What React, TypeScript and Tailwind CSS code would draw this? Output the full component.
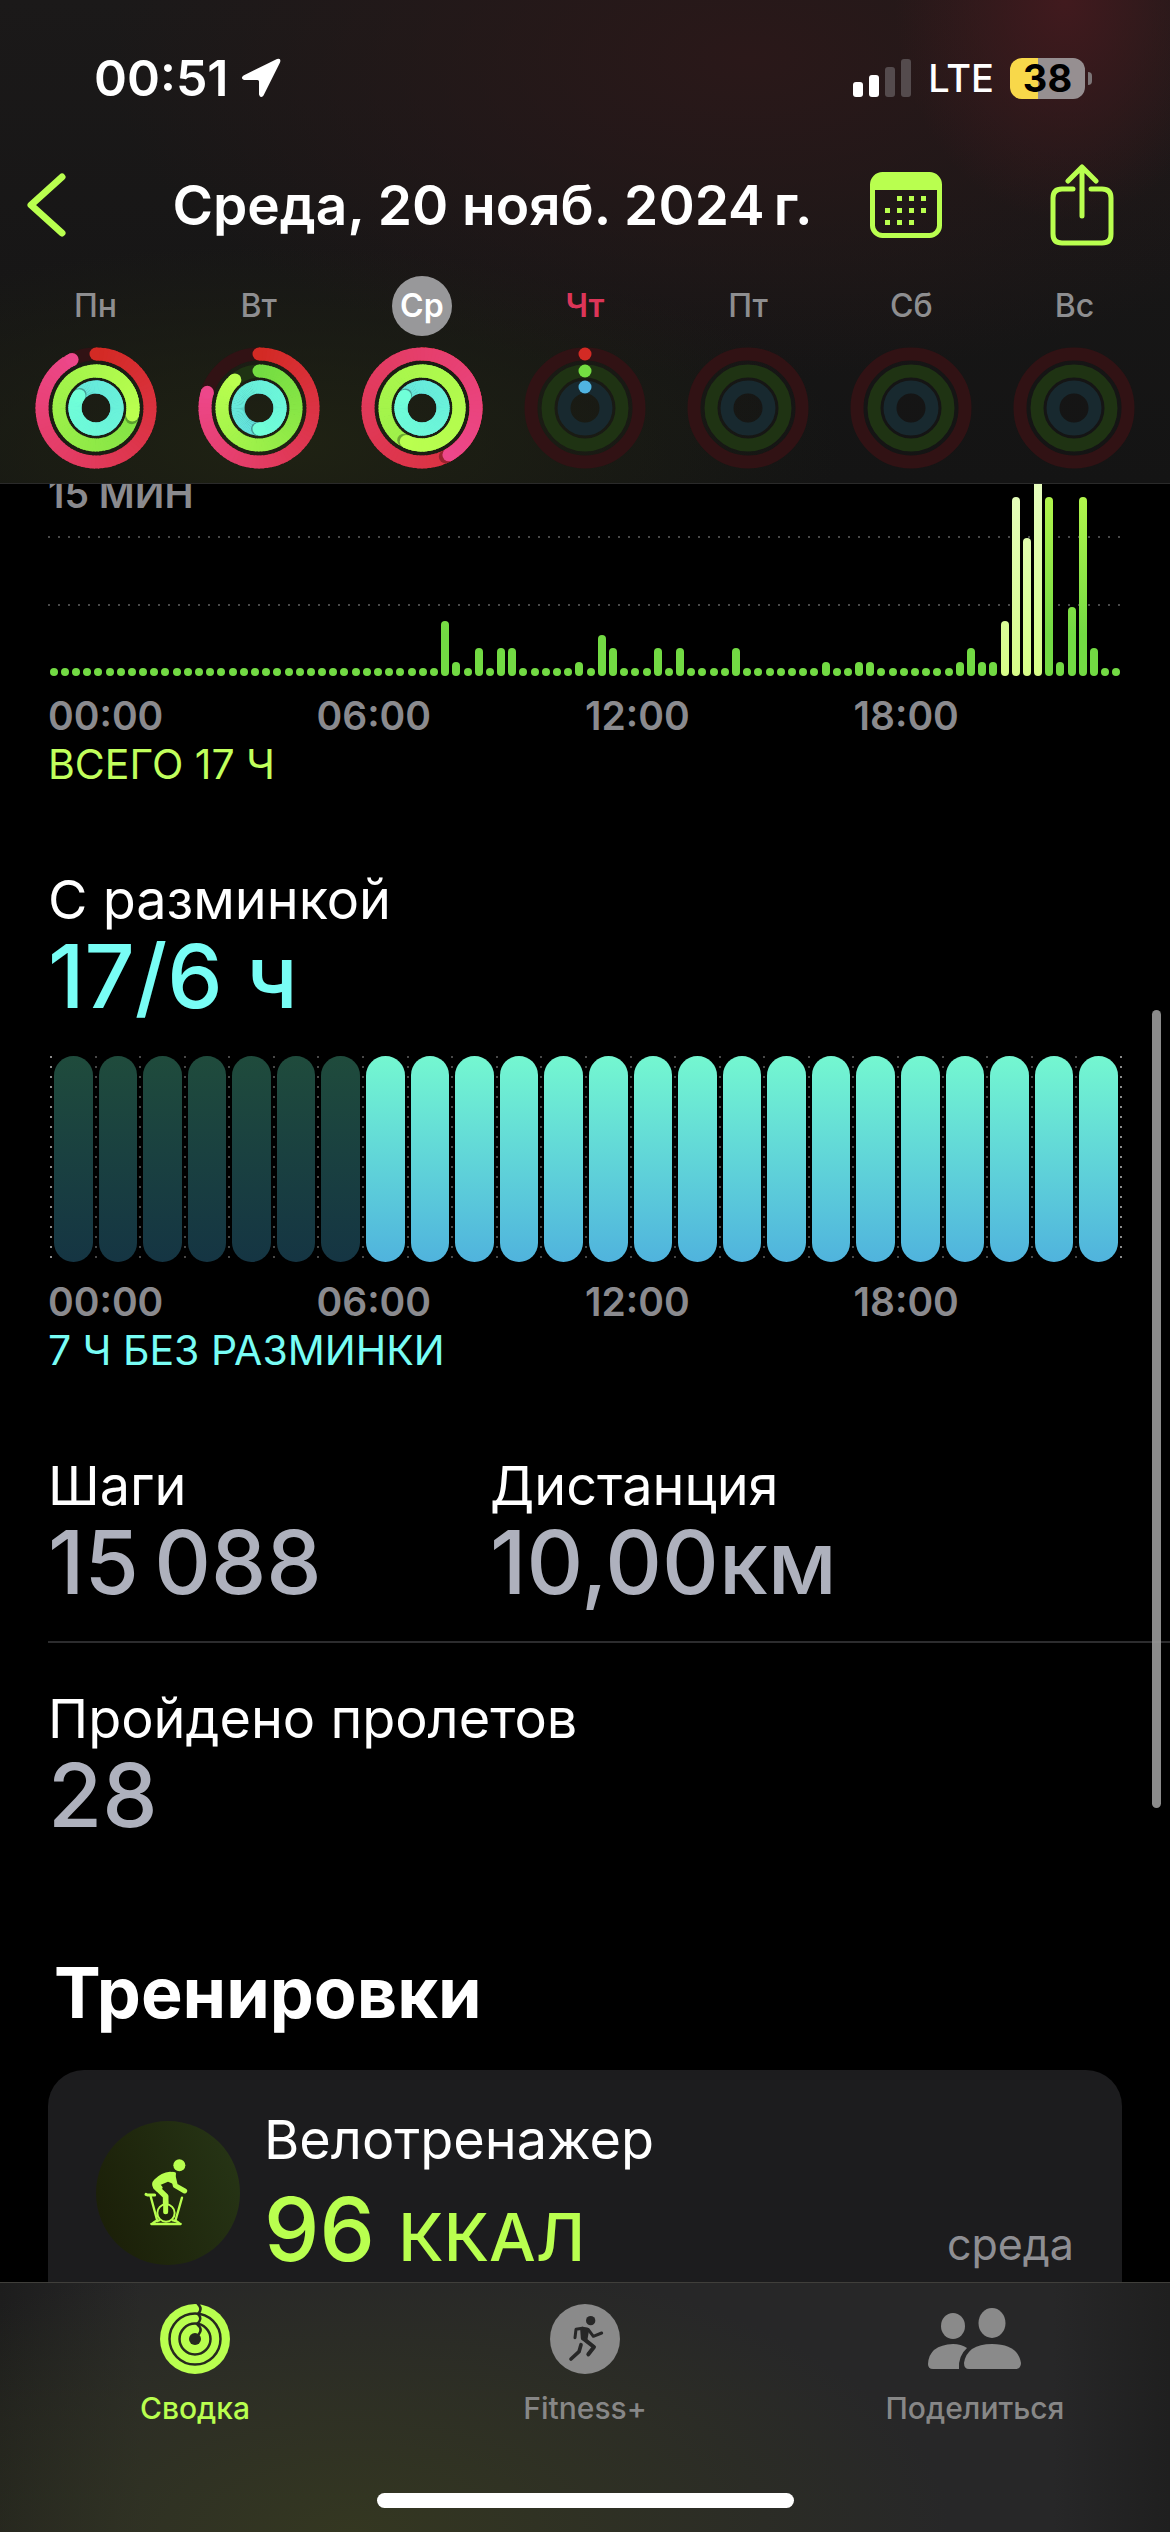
import type { ReactNode } from "react";

type RingSpec = {
  radius: number;
  from: number[];
  to: number[];
  track: string;
};

const RINGS: RingSpec[] = [
  { radius: 54, from: [211, 42, 36], to: [237, 71, 138], track: "#311214" },
  { radius: 37, from: [116, 220, 66], to: [186, 255, 79], track: "#1f3313" },
  { radius: 21, from: [80, 180, 226], to: [112, 255, 216], track: "#18292f" },
];

const DAYS = [
  { label: "Пн", laps: [0.927, 1.28, 1.85] },
  { label: "Вт", laps: [0.797, 0.887, 1.5] },
  { label: "Ср", laps: [1.417, 1.57, 1.845], selected: true },
  { label: "Чт", laps: [0, 0, 0], today: true },
  { label: "Пт" },
  { label: "Сб" },
  { label: "Вс" },
];

// minutes of exercise per quarter of an hour, by slot
const MINUTES: Record<number, number> = {
  35: 4, 36: 1, 38: 2, 40: 2, 41: 2, 47: 1, 49: 3, 50: 2, 54: 2, 56: 2,
  61: 2, 69: 1, 72: 1, 73: 1, 81: 1, 82: 2, 83: 1, 84: 1, 85: 4, 86: 13,
  87: 10, 88: 15, 89: 13, 90: 1, 91: 5, 92: 13, 93: 2,
};

const HOURS = ["00:00", "06:00", "12:00", "18:00"];

const point = (radius: number, lap: number) => {
  const a = lap * Math.PI * 2;
  return [61 + radius * Math.sin(a), 61 - radius * Math.cos(a)];
};

const mix = (from: number[], to: number[], t: number) =>
  `rgb(${from.map((c, i) => Math.round(c + (to[i] - c) * t)).join(",")})`;

const Ring = ({ ring, laps }: { ring: RingSpec; laps?: number }) => {
  const { radius, from, to, track } = ring;
  if (laps === undefined) {
    return <circle cx="61" cy="61" r={radius} fill="none" stroke={track} strokeWidth="13" />;
  }

  const steps = Math.round(laps * 90);
  const ease = laps >= 1.5 ? 0.5 : 1;
  const [sx, sy] = point(radius, 0);
  const [hx, hy] = point(radius, laps);
  const [gx, gy] = point(radius, laps + 0.012);

  return (
    <>
      <circle cx="61" cy="61" r={radius} fill="none" stroke={track} strokeWidth="13" />
      <circle cx={sx} cy={sy} r="6.5" fill={mix(from, to, 0)} />
      {Array.from({ length: steps }, (_, i) => {
        const [x1, y1] = point(radius, (i / steps) * laps);
        const [x2, y2] = point(radius, ((i + 1.3) / steps) * laps);
        return (
          <path
            key={i}
            d={`M${x1} ${y1}A${radius} ${radius} 0 0 1 ${x2} ${y2}`}
            fill="none"
            stroke={mix(from, to, Math.pow(i / steps, ease))}
            strokeWidth="13"
          />
        );
      })}
      {laps > 1 ? <circle cx={gx} cy={gy} r="6.5" fill="#000" opacity="0.3" /> : null}
      {laps > 0 ? <circle cx={hx} cy={hy} r="6.5" fill={mix(from, to, 1)} /> : null}
    </>
  );
};

const ActivityRings = ({ laps }: { laps?: number[] }) => (
  <svg className="size-[122px]" viewBox="0 0 122 122" aria-hidden>
    {RINGS.map((ring, i) => (
      <Ring key={ring.radius} ring={ring} laps={laps?.[i]} />
    ))}
  </svg>
);

const StatusBar = () => (
  <div className="flex h-[156px] items-center justify-between pr-[78px] pl-[94px]">
    <div className="flex items-center gap-3">
      <span className="text-[50px] leading-none font-semibold">00:51</span>
      <svg className="size-10" viewBox="0 0 40 40" aria-hidden>
        <path
          d="M36 1 2.500 17.500Q-1 20 3 22H16.500Q18 22 18 23.500V36.500Q19.500 41 22.500 37.500L39 4.500Q40.500 -0.500 36 1Z"
          fill="#fff"
        />
      </svg>
    </div>
    <div className="flex items-center gap-4">
      <svg className="h-[38px] w-[59px]" viewBox="0 0 59 38" aria-hidden>
        <rect x="0" y="23" width="10" height="15" rx="3" fill="#fff" />
        <rect x="16" y="16" width="10" height="22" rx="3" fill="#fff" />
        <rect x="32" y="8" width="10" height="30" rx="3" fill="#544b4d" />
        <rect x="48" y="0" width="10" height="38" rx="3" fill="#544b4d" />
      </svg>
      <span className="text-[38px] leading-none font-medium">LTE</span>
      <div className="flex items-center gap-[3px]">
        <div className="flex h-[41px] w-[75px] items-center justify-center rounded-[12px] bg-linear-to-r from-[#f8d84a] from-38% to-[#968f91] to-38% text-[38px] leading-none font-bold text-black">
          38
        </div>
        <div className="h-[13px] w-1 rounded-r-full bg-[#7c7577]" />
      </div>
    </div>
  </div>
);

const TitleBar = () => (
  <div className="flex h-[98px] items-center pr-[56px] pl-[27px] text-[#b9ff4f]">
    <button type="button" aria-label="Назад">
      <svg className="h-[64px] w-[40px]" viewBox="0 0 40 64" fill="none" aria-hidden>
        <path d="M35 4 4 32 35 60" stroke="currentColor" strokeWidth="7" strokeLinecap="round" strokeLinejoin="round" />
      </svg>
    </button>
    <h1 className="flex-1 pl-12 text-center text-[55px] leading-none font-semibold whitespace-nowrap text-white">
      {"Среда, 20 нояб. 2024\u2009г."}
    </h1>
    <button type="button" aria-label="Календарь" className="mr-[108px]">
      <svg className="h-[66px] w-[72px]" viewBox="0 0 72 66" fill="none" aria-hidden>
        <rect x="2.500" y="2.500" width="67" height="61" rx="10" stroke="currentColor" strokeWidth="5" />
        <path d="M3 18V12Q3 3 12 3H60Q69 3 69 12V18Z" fill="currentColor" />
        <g fill="currentColor">
          <path d="M27 24h5v5h-5zM39 24h5v5h-5zM51 24h5v5h-5z" />
          <path d="M15 36h5v5h-5zM27 36h5v5h-5zM39 36h5v5h-5zM51 36h5v5h-5z" />
          <path d="M15 48h5v5h-5zM27 48h5v5h-5zM39 48h5v5h-5z" />
        </g>
      </svg>
    </button>
    <button type="button" aria-label="Поделиться">
      <svg className="h-[82px] w-[64px]" viewBox="0 0 64 82" fill="none" aria-hidden>
        <path
          d="M23 23H12Q3 23 3 32V68Q3 77 12 77H52Q61 77 61 68V32Q61 23 52 23H41M32 50V2M18 15 32 1 46 15"
          stroke="currentColor"
          strokeWidth="5"
          strokeLinecap="round"
          strokeLinejoin="round"
          transform="translate(0 2)"
        />
      </svg>
    </button>
  </div>
);

const WeekStrip = () => (
  <div className="grid grid-cols-7 px-[14px] pt-[22px] pb-[14px]">
    {DAYS.map((day) => (
      <button type="button" key={day.label} className="flex flex-col items-center gap-[11px]">
        <span
          className={
            day.selected
              ? "flex size-[60px] items-center justify-center rounded-full bg-[#98989a] text-[32px] leading-none font-semibold text-white"
              : day.today
                ? "flex size-[60px] items-center justify-center text-[32px] leading-none font-semibold text-[#dc3558]"
                : "flex size-[60px] items-center justify-center text-[32px] leading-none font-medium text-[#8e8e90]"
          }
        >
          {day.label}
        </span>
        <ActivityRings laps={day.laps} />
      </button>
    ))}
  </div>
);

const HourLabels = () => (
  <div className="mt-5 grid grid-cols-4 text-[39px] leading-10 font-semibold text-[#8a8a8e]">
    {HOURS.map((hour) => (
      <span key={hour}>{hour}</span>
    ))}
  </div>
);

const ExerciseChart = () => (
  <div className="relative h-[192px]">
    <span className="absolute -top-[10px] left-0 text-[39px] leading-10 font-semibold text-[#8a8a8e]">
      15 МИН
    </span>
    <div className="absolute inset-x-0 top-[52px] h-[2px] bg-[repeating-linear-gradient(90deg,#4a4a4a_0_2px,transparent_2px_10px)]" />
    <div className="absolute inset-x-0 top-[120px] h-[2px] bg-[repeating-linear-gradient(90deg,#4a4a4a_0_2px,transparent_2px_10px)]" />
    <div className="relative flex h-full items-end">
      {Array.from({ length: 96 }, (_, i) => (
        <div key={i} className="flex flex-1 justify-center">
          <div
            className={
              i > 84 && i < 89
                ? "w-[8px] shrink-0 rounded-full bg-linear-to-t from-[#d7fd88] to-[#e6fcc0] bg-[length:100%_207px] bg-bottom"
                : "w-[8px] shrink-0 rounded-full bg-linear-to-t from-[#72da43] from-20% to-[#bdfb4d] bg-[length:100%_207px] bg-bottom"
            }
            style={{ height: Math.max(8, Math.round((MINUTES[i] ?? 0) * 13.8)) }}
          />
        </div>
      ))}
    </div>
  </div>
);

const StandChart = () => (
  <div className="mt-9 flex h-[206px] pl-[2px]">
    {Array.from({ length: 24 }, (_, hour) => (
      <div key={hour} className="flex flex-1 gap-[2px]">
        <div
          className={
            hour === 0
              ? "w-[2px] bg-[repeating-linear-gradient(#8a8a8a_0_2px,transparent_2px_10px)]"
              : "w-[2px] bg-[repeating-linear-gradient(#484848_0_2px,transparent_2px_10px)]"
          }
        />
        <div
          className={
            hour < 7
              ? "mr-[2px] flex-1 rounded-full bg-linear-to-b from-[#1f4b3c] to-[#153543]"
              : "mr-[2px] flex-1 rounded-full bg-linear-to-b from-[#74f7d0] to-[#50b3dd]"
          }
        />
      </div>
    ))}
    <div className="w-[2px] bg-[repeating-linear-gradient(#8a8a8a_0_2px,transparent_2px_10px)]" />
  </div>
);

const Metric = ({ label, children }: { label: string; children: ReactNode }) => (
  <div>
    <h2 className="text-[54px] leading-[64px]">{label}</h2>
    <p className="text-[88px] leading-[88px] font-medium text-[#aeb1bd]">{children}</p>
  </div>
);

const BikeIcon = () => (
  <svg className="mt-[13px] size-[144px] shrink-0" viewBox="-70 -52 432 432" fill="none" aria-hidden>
    <defs>
      <linearGradient id="badge" x1="0" y1="0.700" x2="1" y2="0.300">
        <stop offset="0" stopColor="#1b1f08" />
        <stop offset="1" stopColor="#263415" />
      </linearGradient>
    </defs>
    <circle cx="146" cy="164" r="216" fill="url(#badge)" />
    <circle cx="180" cy="81" r="18" fill="#b9ff4f" />
    <g stroke="#b9ff4f" strokeLinecap="round" strokeLinejoin="round">
      <path d="M152 104Q128 106 108 126 98 136 106 148L114 156 126 148 118 138 146 126 160 132 166 106Z" fill="#b9ff4f" strokeWidth="8" />
      <path d="M110 146 139 174V218" strokeWidth="17" />
      <path d="M160 108 168 142 196 158" strokeWidth="15" />
      <path d="M80 168 84 170 106 170" strokeWidth="9" />
      <path d="M94 174 114 248M188 178 168 248" strokeWidth="7" />
      <path d="M98 257Q108 246 120 246M182 257Q172 246 160 246M96 257H184" strokeWidth="7" />
      <circle cx="140" cy="224" r="26" fill="#1d230c" strokeWidth="6" />
      <path d="M139 190V220" strokeWidth="15" />
    </g>
  </svg>
);

const SummaryIcon = () => (
  <svg className="size-[70px]" viewBox="-35 -35 70 70" fill="none" aria-hidden>
    <circle r="35" fill="#b9ff4f" />
    <g stroke="#26291f" strokeWidth="2.500" strokeLinecap="round">
      <circle r="25.500" />
      <circle r="15.500" />
      <path d="M3 -35Q8 -30 3 -25M3 -25Q8 -20 2 -15M2 -15Q8 -10 4 -5" />
    </g>
    <circle r="6" fill="#26291f" />
  </svg>
);

const FitnessIcon = () => (
  <svg className="size-[70px]" viewBox="27 25 210 210" fill="none" aria-hidden>
    <circle cx="132" cy="130" r="105" fill="#8a8a8a" />
    <circle cx="149" cy="75" r="14" fill="#272727" />
    <g stroke="#272727" strokeLinecap="round" strokeLinejoin="round">
      <path d="M124 100 138 102 133 130 126 128Z" fill="#272727" strokeWidth="13" />
      <path d="M124 98 105 101 102 126" strokeWidth="9" />
      <path d="M142 102 157 122 182 112" strokeWidth="9" />
      <path d="M131 132 159 154 142 176" strokeWidth="12" />
      <path d="M120 147 114 168 90 190" strokeWidth="11" />
    </g>
  </svg>
);

const SharingIcon = () => (
  <svg className="h-[70px] w-[94px]" viewBox="0 0 94 70" fill="#8a8a8a" aria-hidden>
    <ellipse cx="25" cy="22" rx="12" ry="13" />
    <ellipse cx="64" cy="19" rx="13.500" ry="15" />
    <path d="M5 65Q0 65 0 60Q1 41 25 40Q33 40 39 44Q30 52 31 65Z" />
    <path d="M41 65Q36 65 36 59Q39 40 64 40Q90 40 93 59Q93 65 87 65Z" />
  </svg>
);

const TABS = [
  { label: "Сводка", icon: <SummaryIcon />, active: true },
  { label: "Fitness+", icon: <FitnessIcon /> },
  { label: "Поделиться", icon: <SharingIcon /> },
];

const TabBar = () => (
  <nav className="flex h-[250px] shrink-0 flex-col items-center justify-between border-t border-[#403f3b] bg-[#272728] bg-[radial-gradient(600px_280px_at_30%_100%,#343721,transparent),linear-gradient(90deg,#1d1d1d,transparent_12%,transparent_90%,#1f1f1f)] pt-[21px] pb-6">
    <div className="grid w-full grid-cols-3">
      {TABS.map((tab) => (
        <a
          key={tab.label}
          href="#"
          className={
            tab.active
              ? "flex flex-col items-center gap-[14px] text-[30px] leading-10 font-medium text-[#b9ff4f]"
              : "flex flex-col items-center gap-[14px] text-[30px] leading-10 font-medium text-[#878787]"
          }
        >
          {tab.icon}
          {tab.label}
        </a>
      ))}
    </div>
    <div className="h-[15px] w-[417px] rounded-full bg-white" />
  </nav>
);

const App = () => {
  return (
    <div className="flex h-screen flex-col overflow-hidden bg-black font-['Inter',sans-serif] text-white">
      <header className="shrink-0 border-b border-[#2a2a2a] bg-[#151515] bg-[radial-gradient(170px_220px_at_91%_0%,#411a1e,transparent),radial-gradient(640px_320px_at_64%_12%,#2a1819,transparent),radial-gradient(560px_200px_at_24%_92%,#1f2213,transparent),linear-gradient(#1b1919,#141414)]">
        <StatusBar />
        <TitleBar />
        <WeekStrip />
      </header>

      <main className="relative min-h-0 flex-1 overflow-hidden">
        <div className="px-12">
          <section>
            <ExerciseChart />
            <HourLabels />
            <p className="mt-1 text-[41px] leading-[48px] text-[#c1ff5c]">ВСЕГО 17 Ч</p>
          </section>

          <section className="mt-20">
            <h2 className="text-[54px] leading-[64px]">С разминкой</h2>
            <p className="text-[88px] leading-[88px] font-medium text-[#78fdf5]">17/6 ч</p>
            <StandChart />
            <HourLabels />
            <p className="mt-1 text-[41px] leading-[48px] text-[#78fdf5]">7 Ч БЕЗ РАЗМИНКИ</p>
          </section>
        </div>

        <section className="mt-20 pl-12">
          <div className="flex border-b-2 border-[#2c2c2e] pb-[35px]">
            <div className="w-[442px]">
              <Metric label="Шаги">{"15\u2009088"}</Metric>
            </div>
            <Metric label="Дистанция">10,00км</Metric>
          </div>
          <div className="mt-[44px]">
            <Metric label="Пройдено пролетов">28</Metric>
          </div>
        </section>

        <section className="mt-[114px] px-12">
          <h2 className="pl-[6px] text-[70px] leading-[80px] font-bold">Тренировки</h2>
          <a href="#" className="mt-[37px] flex rounded-[36px] bg-[#1c1c1e] px-12 pt-[38px] pb-12">
            <BikeIcon />
            <div className="ml-6">
              <h3 className="text-[54px] leading-[64px]">Велотренажер</h3>
              <p className="mt-[13px] text-[88px] leading-[88px] font-medium text-[#b9ff4f]">
                96 <span className="text-[66px]">ККАЛ</span>
              </p>
            </div>
            <span className="mt-[112px] ml-auto text-[43px] leading-[48px] text-[#8e8e93]">среда</span>
          </a>
        </section>

        <div className="absolute top-[526px] right-[9px] h-[798px] w-[9px] rounded-full bg-[#9a9a9a]/90" />
      </main>

      <TabBar />
    </div>
  );
};

export default App;
